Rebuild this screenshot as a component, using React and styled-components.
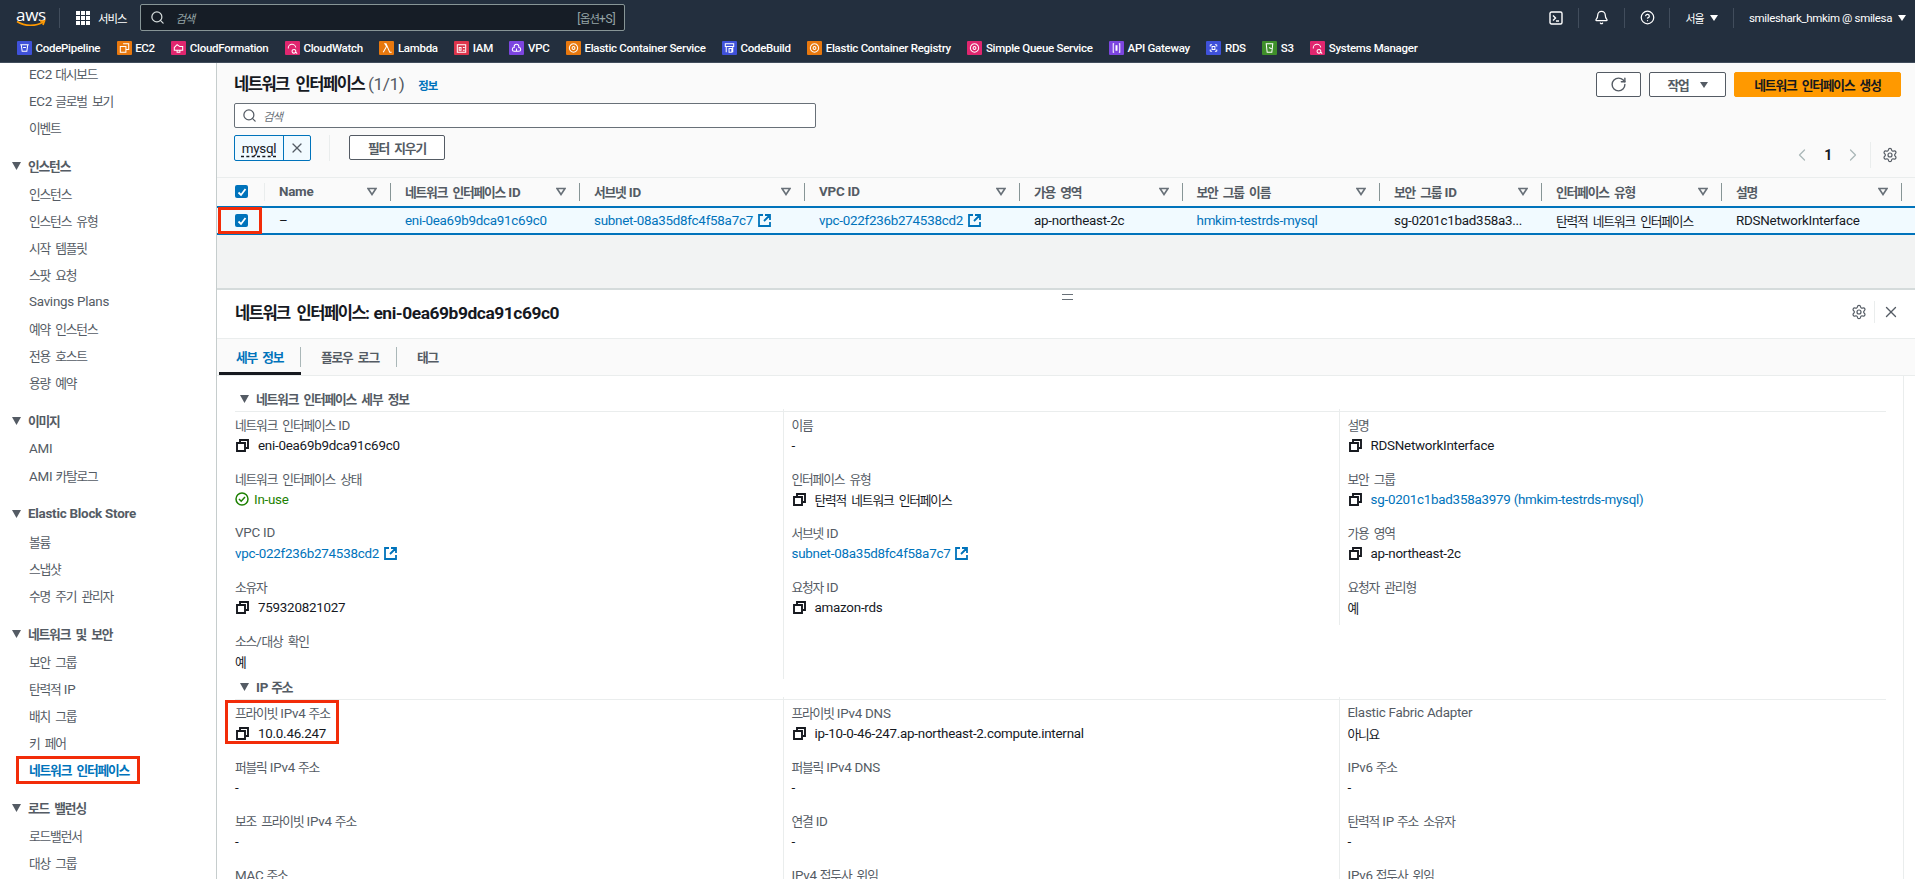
import React from 'react';
import styled, { createGlobalStyle } from 'styled-components';
import { Search, RotateCw, ChevronLeft, ChevronRight, X, Settings, Bell, CircleHelp } from 'lucide-react';

const LINK = '#0073bb';
const MUTED = '#545b64';
const INK = '#16191f';
const LINE = '#eaeded';

const GlobalStyle = createGlobalStyle`
    html, body { margin: 0; height: 100%; overflow: hidden; }
    body {
        font-family: Roboto, "Noto Sans CJK KR", sans-serif;
        font-size: 13.4px;
        letter-spacing: -.25px;
        color: ${INK};
        background: #fff;
    }
    * { box-sizing: border-box; }
`;

// Hangul runs set tighter than the latin around them
const HangulRun = styled.span`
    font-family: "Noto Sans CJK KR", sans-serif;
    font-size: .95em;
    letter-spacing: -.09em;
    word-spacing: .27em;
`;

const T = ({ children }) => (
    <>
        {String(children).split(/([\uAC00-\uD7A3]+(?: [\uAC00-\uD7A3]+)*)/).map((part, i) => (
            i % 2 ? <HangulRun key={i}>{part}</HangulRun> : part
        ))}
    </>
);

const Page = styled.div`
    height: 100vh;
    display: flex;
    flex-direction: column;
    overflow: hidden;
`;

/* top navigation */
const Header = styled.header`
    flex: 0 0 63px;
    background: #232f3e;
    color: #fff;
    border-bottom: 1px solid #414d5c;
`;

const TopRow = styled.div`
    height: 35px;
    display: flex;
    align-items: center;
    padding-left: 16px;
`;

const AwsLogo = styled.div`
    width: 30px;
    height: 20px;
    position: relative;
    font: 500 17px/13px "Open Sans", sans-serif;
    letter-spacing: -.3px;
    margin-top: 1px;
    svg { position: absolute; left: 0; top: 12px; }
`;

const NavDivider = styled.div`
    width: 1px;
    height: 20px;
    margin-left: ${p => p.$ml || 0}px;
    background: #414d5c;
`;

const ServicesButton = styled.div`
    display: flex;
    align-items: center;
    gap: 8px;
    font-size: 12px;
    margin: 0 14px 0 16px;
`;

const GridDots = styled.div`
    width: 14px;
    height: 14px;
    display: grid;
    grid-template-columns: repeat(3, 4px);
    gap: 1px;
    i { background: #fff; }
`;

const GlobalSearch = styled.div`
    width: 485px;
    height: 27px;
    display: flex;
    align-items: center;
    gap: 10px;
    padding: 0 9px 0 9px;
    background: #161d26;
    border: 1px solid #879596;
    border-radius: 2px;
    font-size: 12px;
    color: #95a5a6;
    em { flex: 1; }
`;

const NavRight = styled.div`
    margin-left: auto;
    display: flex;
    align-items: center;
    height: 100%;
`;

const NavCell = styled.div`
    height: 20px;
    display: flex;
    align-items: center;
    justify-content: center;
    gap: 6px;
    width: ${p => p.$w}px;
    padding-left: ${p => p.$pad || 0}px;
    font-size: 11.5px;
    letter-spacing: -.35px;
    white-space: nowrap;
    border-left: ${p => (p.$first ? 'none' : '1px solid #414d5c')};
`;

const Caret = styled.span`
    width: 0;
    height: 0;
    border-left: 4px solid transparent;
    border-right: 4px solid transparent;
    border-top: 6px solid ${p => p.$color || '#fff'};
`;

const ShortcutRow = styled.div`
    height: 27px;
    display: flex;
    align-items: center;
    gap: 16.5px;
    padding: 0 0 1px 17px;
`;

const Shortcut = styled.div`
    display: flex;
    align-items: center;
    gap: 3.5px;
    font-size: 11.5px;
    font-weight: 500;
    letter-spacing: -.28px;
    white-space: nowrap;
`;

const ServiceTile = styled.svg`
    width: 15px;
    height: 14px;
    flex: none;
    display: block;
    background: ${p => p.$bg};
    border-radius: 1px;
    fill: none;
    stroke: #fff;
    stroke-width: 1.1;
`;

const GLYPHS = {
    pipeline: <path d="M3 4h9M4 4l1 7h5l1-7M6 7h3" />,
    ec2: <path d="M6 3h6v6H9M3 6h6v6H3z" />,
    stack: <path d="M3 10V7l3-3 3 2h3v4zM6 10v2h3v-2" />,
    watch: <path d="M3 8a4 4 0 0 1 8-1M9 9a2 2 0 1 0 .1 0M10.5 11.5l2 2" />,
    lambda: <path d="M4 12l3.5-6L6 3H5m1 0h1l4 9h2" />,
    iam: <path d="M3 4h9v8H3zM5 7h2v3H5zM9 7h2M9 10h2" />,
    vpc: <path d="M5 6a2.5 2.5 0 0 1 5 0v1a2 2 0 0 1 0 4H5a2 2 0 0 1 0-4zM7.5 8v3" />,
    gear: <path d="M7.5 3a4.5 4.5 0 1 0 .01 0M7.5 6a1.5 1.5 0 1 0 .01 0" />,
    build: <path d="M3 3h9v3H3zM4 6v6M11 6v6M7 8h3v4H7z" />,
    bracket: <path d="M5 3H4v9h1M10 3h1v9h-1M7 5h1v5H7z" />,
    cluster: <path d="M4 4h2M9 4h2M4 11h2M9 11h2M4 4v2M11 4v2M4 9v2M11 9v2M6 6h3v3H6z" />,
    bucket: <path d="M4 3h7l-1 9H5zM7 7l4 2" />,
};

const Service = ({ name, bg, glyph }) => (
    <Shortcut>
        <ServiceTile viewBox="0 0 15 15" $bg={bg}>{GLYPHS[glyph]}</ServiceTile>
        {name}
    </Shortcut>
);

const SHORTCUTS = [
    ['CodePipeline', '#3f51d9', 'pipeline'],
    ['EC2', '#e8780e', 'ec2'],
    ['CloudFormation', '#e0266f', 'stack'],
    ['CloudWatch', '#e0266f', 'watch'],
    ['Lambda', '#e8780e', 'lambda'],
    ['IAM', '#dd344c', 'iam'],
    ['VPC', '#7c45e0', 'vpc'],
    ['Elastic Container Service', '#e8780e', 'gear'],
    ['CodeBuild', '#3f51d9', 'build'],
    ['Elastic Container Registry', '#e8780e', 'gear'],
    ['Simple Queue Service', '#e0266f', 'gear'],
    ['API Gateway', '#7c45e0', 'bracket'],
    ['RDS', '#3f51d9', 'cluster'],
    ['S3', '#3f8f2a', 'bucket'],
    ['Systems Manager', '#e0266f', 'watch'],
];

/* left navigation */
const Body = styled.div`
    flex: 1;
    min-height: 0;
    display: flex;
`;

const Sidebar = styled.nav`
    flex: 0 0 217px;
    overflow: hidden;
    background: #fff;
    border-right: 1px solid #c6cdcd;
    color: ${MUTED};
    padding-top: 0;
`;

const SideList = styled.div`
    margin-top: -3px;
`;

const SideItem = styled.div`
    position: relative;
    height: 27px;
    line-height: 27px;
    padding-left: 29px;
    white-space: nowrap;
    color: ${p => (p.$active ? LINK : MUTED)};
    font-weight: ${p => (p.$active ? 700 : 400)};
`;

const SideHeading = styled.div`
    height: 39px;
    padding: 11px 0 0 12px;
    line-height: 28px;
    display: flex;
    align-items: center;
    gap: 7px;
    font-weight: 700;
    color: ${MUTED};
`;

const SideMark = styled.span`
    position: absolute;
    left: 16px;
    top: 0;
    width: 124px;
    height: 28px;
    border: 3px solid #f22c09;
`;

const NAV = [
    [null, ['EC2 대시보드', 'EC2 글로벌 보기', '이벤트']],
    ['인스턴스', ['인스턴스', '인스턴스 유형', '시작 템플릿', '스팟 요청', 'Savings Plans', '예약 인스턴스', '전용 호스트', '용량 예약']],
    ['이미지', ['AMI', 'AMI 카탈로그']],
    ['Elastic Block Store', ['볼륨', '스냅샷', '수명 주기 관리자']],
    ['네트워크 및 보안', ['보안 그룹', '탄력적 IP', '배치 그룹', '키 페어', '네트워크 인터페이스']],
    ['로드 밸런싱', ['로드밸런서', '대상 그룹']],
];

/* main column */
const Main = styled.main`
    flex: 1;
    min-width: 0;
    display: flex;
    flex-direction: column;
    background: #f2f3f3;
`;

const ListPanel = styled.section`
    flex: none;
`;

const ListTop = styled.div`
    height: 114px;
    padding: 9px 14px 0 17px;
    background: #fafafa;
`;

const TitleRow = styled.div`
    height: 25px;
    display: flex;
    align-items: center;
    gap: 8px;
`;

const PageTitle = styled.h1`
    margin: 0;
    padding-bottom: 3px;
    font-size: 17.4px;
    font-weight: 700;
    span.count { font-weight: 400; color: ${MUTED}; margin-left: 4px; letter-spacing: -.5px; }
`;

const InfoLink = styled.a`
    color: ${LINK};
    font-size: 12px;
    font-weight: 700;
    margin-left: 6px;
`;

const Actions = styled.div`
    margin-left: auto;
    display: flex;
    gap: 8px;
`;

const Button = styled.button`
    height: 25px;
    width: ${p => p.$w}px;
    display: flex;
    align-items: center;
    justify-content: center;
    gap: 11px;
    padding: 0;
    font: 700 13.4px Roboto, "Noto Sans CJK KR", sans-serif;
    color: ${p => (p.$primary ? INK : MUTED)};
    background: ${p => (p.$primary ? '#ff9900' : '#fff')};
    border: 1px solid ${p => (p.$primary ? '#ff9900' : MUTED)};
    border-radius: 2px;
`;

const FilterInput = styled.div`
    width: 582px;
    height: 25px;
    margin-top: 6px;
    display: flex;
    align-items: center;
    gap: 6px;
    padding-left: 7px;
    background: #fff;
    border: 1px solid #687078;
    border-radius: 2px;
    font-size: 12px;
    color: #687078;
`;

const FilterRow = styled.div`
    height: 26px;
    margin-top: 7px;
    display: flex;
`;

const Token = styled.div`
    width: 77px;
    display: flex;
    background: #f1faff;
    border: 1px solid ${LINK};
    border-radius: 2px;
    div { width: 49px; border-right: 1px solid ${LINK}; display: flex; align-items: center; justify-content: center; }
    u { text-decoration: underline dashed; text-underline-offset: 3px; }
    span { flex: 1; display: flex; align-items: center; justify-content: center; color: ${MUTED}; }
`;

const ThinRule = styled.div`
    width: 1px;
    background: ${LINE};
    margin: 0 19px 0 18px;
`;

const Pager = styled.div`
    margin-left: auto;
    height: 26px;
    margin-top: 7px;
    display: flex;
    align-items: center;
    color: #aab7b8;
    b { color: ${INK}; font-size: 14px; margin: 0 11px 0 12px; }
`;

const PagerGear = styled.div`
    margin-left: 7px;
    padding: 0 3px 0 11px;
    height: 26px;
    display: flex;
    align-items: center;
    color: ${MUTED};
    border-left: 1px solid ${LINE};
`;

const TABLE_COLUMNS = '48px 126px 189px 225px 215px 162.5px 197.5px 162px 180px 180px';

const HeadRow = styled.div`
    display: grid;
    grid-template-columns: ${TABLE_COLUMNS};
    align-items: center;
    height: 29px;
    padding-bottom: 1px;
    background: #fafafa;
    border-top: 1px solid ${LINE};
`;

const HeadCell = styled.div`
    height: 18px;
    display: flex;
    align-items: center;
    justify-content: space-between;
    padding: 0 13px 0 14px;
    font-weight: 700;
    white-space: nowrap;
    color: ${MUTED};
    border-right: 1px solid #879596;
`;

const CheckCell = styled.div`
    height: 18px;
    display: flex;
    align-items: center;
    padding-left: 18px;
    border-right: 1px solid ${LINE};
`;

const Checkbox = styled.span`
    width: 13px;
    height: 13px;
    display: flex;
    align-items: center;
    justify-content: center;
    background: ${LINK};
    border-radius: 2px;
`;

const DataRow = styled.div`
    display: grid;
    grid-template-columns: ${TABLE_COLUMNS};
    height: 29px;
    background: #f1faff;
    border-top: 2px solid ${LINK};
    border-bottom: 2px solid ${LINK};
`;

const DataCell = styled.div`
    position: relative;
    display: flex;
    align-items: center;
    gap: 5px;
    padding-left: ${p => p.$pad || 14}px;
    white-space: nowrap;
    color: ${p => (p.$link ? LINK : INK)};
`;

const RowMark = styled.span`
    position: absolute;
    left: 1px;
    top: -1px;
    width: 44px;
    height: 27px;
    border: 3px solid #f22c09;
`;

const Spacer = styled.div`
    flex: 0 0 53px;
`;

/* detail panel */
const DetailPanel = styled.section`
    flex: 1;
    min-height: 0;
    display: flex;
    flex-direction: column;
    position: relative;
    background: #fff;
    border-top: 2px solid #d5dbdb;
`;

const DragHandle = styled.span`
    position: absolute;
    left: 845px;
    top: 4px;
    width: 11px;
    height: 6px;
    border-top: 1.5px solid #687078;
    border-bottom: 1.5px solid #687078;
`;

const DetailHead = styled.div`
    flex: 0 0 49px;
    display: flex;
    align-items: center;
    padding: 0 15px 5px 18px;
    border-bottom: 1px solid ${LINE};
    h2 { margin: 0; font-size: 17.4px; font-weight: 700; letter-spacing: -.45px; }
`;

const DetailTools = styled.div`
    margin-left: auto;
    display: flex;
    align-items: center;
    color: ${MUTED};
    span { margin-left: 7px; padding-left: 7px; height: 22px; display: flex; align-items: center; border-left: 1px solid ${LINE}; }
`;

const Tabs = styled.div`
    flex: 0 0 37px;
    display: flex;
    align-items: stretch;
    padding-left: 2px;
    background: #fafafa;
    border-bottom: 1px solid ${LINE};
`;

const Tab = styled.div`
    height: 36px;
    width: ${p => p.$w}px;
    padding: 0 0 2px ${p => p.$pad}px;
    display: flex;
    align-items: center;
    font-weight: 700;
    color: ${p => (p.$active ? LINK : MUTED)};
    box-shadow: ${p => (p.$active ? `inset 0 -3px 0 ${INK}` : 'none')};
    position: relative;
    &:not(:last-child)::after {
        content: '';
        position: absolute;
        right: 0;
        top: 8px;
        height: 20px;
        width: 1px;
        background: #aab7b8;
    }
`;

const DetailScroll = styled.div`
    flex: 1;
    min-height: 0;
    overflow: hidden;
    padding: 0 0 0 18px;
    margin-right: 11px;
    border-right: 1px solid ${LINE};
`;

const SectionHead = styled.div`
    width: 1651px;
    height: ${p => (p.$first ? 36 : 21)}px;
    padding: ${p => (p.$first ? '15px' : '0')} 0 5px 5px;
    display: flex;
    align-items: center;
    gap: 7px;
    font-weight: 700;
    color: ${MUTED};
    border-bottom: 1px solid ${LINE};
`;

const FieldGrid = styled.div`
    margin-top: -3px;
    display: grid;
    grid-template-columns: 547.5px 556px 548px;
`;

const FieldColumn = styled.div`
    padding: 6px 0 8px ${p => (p.$rule ? 8 : 0)}px;
    border-left: ${p => (p.$rule ? `1px solid ${LINE}` : 'none')};
    align-self: ${p => (p.$short ? 'start' : 'stretch')};
`;

const Field = styled.div`
    position: relative;
    & + & { margin-top: 14px; }
`;

const FieldLabel = styled.div`
    height: 20px;
    line-height: 20px;
    color: ${MUTED};
    white-space: nowrap;
`;

const FieldValue = styled.div`
    height: 20px;
    display: flex;
    align-items: center;
    gap: 9px;
    white-space: nowrap;
    color: ${p => (p.$link ? LINK : INK)};
`;

const StatusOk = styled.div`
    height: 20px;
    display: flex;
    align-items: center;
    gap: 5px;
    color: #1d8102;
`;

const LinkValue = styled.div`
    height: 20px;
    display: flex;
    align-items: center;
    gap: 5px;
    color: ${LINK};
    white-space: nowrap;
`;

const FieldMark = styled.span`
    position: absolute;
    left: -10px;
    top: -3px;
    width: 114px;
    height: 44px;
    border: 3px solid #f22c09;
`;

/* drawn icons */
const DownTriangle = () => (
    <svg width="10" height="9" viewBox="0 0 10 9" fill="none" stroke="#687078" strokeWidth="1.6"><path d="M1 1.5h8L5 7.5z" /></svg>
);

const SideArrow = () => (
    <svg width="9" height="8" viewBox="0 0 9 8" fill={MUTED}><path d="M0 0h9L4.5 8z" /></svg>
);

const CheckMark = () => (
    <svg width="10" height="10" viewBox="0 0 10 10" fill="none" stroke="#fff" strokeWidth="1.8"><path d="M1.5 5.5l2.5 2.5 4.5-6" /></svg>
);

const ExternalIcon = () => (
    <svg width="13" height="13" viewBox="0 0 13 13" fill="none" stroke={LINK} strokeWidth="1.8" style={{ flex: 'none' }}>
        <path d="M5 1H1v11h11V8M7 1h5v5M12 1L6 7" />
    </svg>
);

const CopyIcon = () => (
    <svg width="13" height="13" viewBox="0 0 13 13" fill="none" stroke={INK} strokeWidth="1.9" style={{ flex: 'none', marginLeft: 1 }}>
        <path d="M1 4h8v8H1zM4 3V1h8v8h-2" />
    </svg>
);

const CheckCircle = () => (
    <svg width="14" height="14" viewBox="0 0 14 14" fill="none" stroke="#1d8102" strokeWidth="1.5" style={{ flex: 'none' }}>
        <circle cx="7" cy="7" r="6" /><path d="M4 7l2.2 2.2L10 5" />
    </svg>
);

const TerminalIcon = () => (
    <svg width="14" height="14" viewBox="0 0 14 14" fill="none" stroke="#fff" strokeWidth="1.4">
        <rect x="1" y="1" width="12" height="12" rx="1.5" /><path d="M4 4.5L6.5 7 4 9.5M7 10h3" />
    </svg>
);

const Copyable = ({ children }) => <FieldValue><CopyIcon /><span><T>{children}</T></span></FieldValue>;
const Plain = ({ children }) => <FieldValue><span><T>{children}</T></span></FieldValue>;
const External = ({ children }) => <LinkValue>{children}<ExternalIcon /></LinkValue>;

const Item = ({ label, mark, children }) => (
    <Field>
        {mark && <FieldMark />}
        <FieldLabel><T>{label}</T></FieldLabel>
        {children}
    </Field>
);

const HEADS = ['Name', '네트워크 인터페이스 ID', '서브넷 ID', 'VPC ID', '가용 영역', '보안 그룹 이름', '보안 그룹 ID', '인터페이스 유형', '설명'];

const App = () => (
    <Page>
        <GlobalStyle />
        <Header>
            <TopRow>
                <AwsLogo>
                    aws
                    <svg width="30" height="8" viewBox="0 0 30 8" fill="none" stroke="#ff9900" strokeWidth="1.6"><path d="M1 1.5c8 5 19 5 26 .5M24 1h4.5L27 5" /></svg>
                </AwsLogo>
                <NavDivider $ml={13} />
                <ServicesButton>
                    <GridDots>{Array.from({ length: 9 }, (_, i) => <i key={i} />)}</GridDots>
                    <T>서비스</T>
                </ServicesButton>
                <GlobalSearch>
                    <Search size={15} color="#d5dbdb" strokeWidth={2} />
                    <em><T>검색</T></em>
                    <span>[<T>옵션</T>+S]</span>
                </GlobalSearch>
                <NavRight>
                    <NavCell $w={45} $first><TerminalIcon /></NavCell>
                    <NavCell $w={46}><Bell size={15} strokeWidth={2} /></NavCell>
                    <NavCell $w={45}><CircleHelp size={15} strokeWidth={2} /></NavCell>
                    <NavCell $w={64}><T>서울</T><Caret /></NavCell>
                    <NavCell $w={182} $pad={6}>smileshark_hmkim @ smilesa<Caret /></NavCell>
                </NavRight>
            </TopRow>
            <ShortcutRow>
                {SHORTCUTS.map(([name, bg, glyph]) => <Service key={name} name={name} bg={bg} glyph={glyph} />)}
            </ShortcutRow>
        </Header>
        <Body>
            <Sidebar>
                <SideList>
                    {NAV.map(([title, items]) => (
                        <div key={items[0]}>
                            {title && <SideHeading><SideArrow /><span><T>{title}</T></span></SideHeading>}
                            {items.map(item => (
                                <SideItem key={item} $active={item === '네트워크 인터페이스'}>
                                    {item === '네트워크 인터페이스' && <SideMark />}
                                    <T>{item}</T>
                                </SideItem>
                            ))}
                        </div>
                    ))}
                </SideList>
            </Sidebar>
            <Main>
                <ListPanel>
                    <ListTop>
                        <TitleRow>
                            <PageTitle><T>네트워크 인터페이스</T><span className="count">(1/1)</span></PageTitle>
                            <InfoLink><T>정보</T></InfoLink>
                            <Actions>
                                <Button $w={45}><RotateCw size={17} strokeWidth={2} /></Button>
                                <Button $w={77}><T>작업</T><Caret $color={MUTED} /></Button>
                                <Button $w={167} $primary><T>네트워크 인터페이스 생성</T></Button>
                            </Actions>
                        </TitleRow>
                        <FilterInput>
                            <Search size={15} color={MUTED} strokeWidth={2} />
                            <em><T>검색</T></em>
                        </FilterInput>
                        <FilterRow>
                            <Token>
                                <div><u>mysql</u></div>
                                <span><X size={16} strokeWidth={1.8} /></span>
                            </Token>
                            <ThinRule />
                            <Button $w={96}><T>필터 지우기</T></Button>
                            <Pager>
                                <ChevronLeft size={20} strokeWidth={1.5} />
                                <b>1</b>
                                <ChevronRight size={20} strokeWidth={1.5} />
                                <PagerGear><Settings size={16} strokeWidth={1.8} /></PagerGear>
                            </Pager>
                        </FilterRow>
                    </ListTop>
                    <HeadRow>
                        <CheckCell><Checkbox><CheckMark /></Checkbox></CheckCell>
                        {HEADS.map(head => (
                            <HeadCell key={head}><span><T>{head}</T></span><DownTriangle /></HeadCell>
                        ))}
                    </HeadRow>
                    <DataRow>
                        <DataCell $pad={18}>
                            <RowMark />
                            <Checkbox><CheckMark /></Checkbox>
                        </DataCell>
                        <DataCell>–</DataCell>
                        <DataCell $link>eni-0ea69b9dca91c69c0</DataCell>
                        <DataCell $link>subnet-08a35d8fc4f58a7c7<ExternalIcon /></DataCell>
                        <DataCell $link>vpc-022f236b274538cd2<ExternalIcon /></DataCell>
                        <DataCell>ap-northeast-2c</DataCell>
                        <DataCell $link>hmkim-testrds-mysql</DataCell>
                        <DataCell>sg-0201c1bad358a3...</DataCell>
                        <DataCell><span><T>탄력적 네트워크 인터페이스</T></span></DataCell>
                        <DataCell>RDSNetworkInterface</DataCell>
                    </DataRow>
                </ListPanel>
                <Spacer />
                <DetailPanel>
                    <DragHandle />
                    <DetailHead>
                        <h2><T>네트워크 인터페이스</T>: eni-0ea69b9dca91c69c0</h2>
                        <DetailTools>
                            <Settings size={16} strokeWidth={1.8} />
                            <span><X size={18} strokeWidth={1.8} /></span>
                        </DetailTools>
                    </DetailHead>
                    <Tabs>
                        <Tab $active $w={82} $pad={17}><T>세부 정보</T></Tab>
                        <Tab $w={96} $pad={20}><T>플로우 로그</T></Tab>
                        <Tab $w={60} $pad={20}><T>태그</T></Tab>
                    </Tabs>
                    <DetailScroll>
                        <SectionHead $first><SideArrow /><span><T>네트워크 인터페이스 세부 정보</T></span></SectionHead>
                        <FieldGrid>
                            <FieldColumn>
                                <Item label="네트워크 인터페이스 ID"><Copyable>eni-0ea69b9dca91c69c0</Copyable></Item>
                                <Item label="네트워크 인터페이스 상태"><StatusOk><CheckCircle />In-use</StatusOk></Item>
                                <Item label="VPC ID"><External>vpc-022f236b274538cd2</External></Item>
                                <Item label="소유자"><Copyable>759320821027</Copyable></Item>
                                <Item label="소스/대상 확인"><Plain>예</Plain></Item>
                            </FieldColumn>
                            <FieldColumn $rule>
                                <Item label="이름"><Plain>-</Plain></Item>
                                <Item label="인터페이스 유형"><Copyable>탄력적 네트워크 인터페이스</Copyable></Item>
                                <Item label="서브넷 ID"><External>subnet-08a35d8fc4f58a7c7</External></Item>
                                <Item label="요청자 ID"><Copyable>amazon-rds</Copyable></Item>
                            </FieldColumn>
                            <FieldColumn $rule $short>
                                <Item label="설명"><Copyable>RDSNetworkInterface</Copyable></Item>
                                <Item label="보안 그룹">
                                    <FieldValue $link><CopyIcon />sg-0201c1bad358a3979 (hmkim-testrds-mysql)</FieldValue>
                                </Item>
                                <Item label="가용 영역"><Copyable>ap-northeast-2c</Copyable></Item>
                                <Item label="요청자 관리형"><Plain>예</Plain></Item>
                            </FieldColumn>
                        </FieldGrid>
                        <SectionHead><SideArrow /><span><T>IP 주소</T></span></SectionHead>
                        <FieldGrid>
                            <FieldColumn>
                                <Item label="프라이빗 IPv4 주소" mark><Copyable>10.0.46.247</Copyable></Item>
                                <Item label="퍼블릭 IPv4 주소"><Plain>-</Plain></Item>
                                <Item label="보조 프라이빗 IPv4 주소"><Plain>-</Plain></Item>
                                <Item label="MAC 주소"><Plain>-</Plain></Item>
                            </FieldColumn>
                            <FieldColumn $rule>
                                <Item label="프라이빗 IPv4 DNS"><Copyable>ip-10-0-46-247.ap-northeast-2.compute.internal</Copyable></Item>
                                <Item label="퍼블릭 IPv4 DNS"><Plain>-</Plain></Item>
                                <Item label="연결 ID"><Plain>-</Plain></Item>
                                <Item label="IPv4 접두사 위임"><Plain>-</Plain></Item>
                            </FieldColumn>
                            <FieldColumn $rule>
                                <Item label="Elastic Fabric Adapter"><Plain>아니요</Plain></Item>
                                <Item label="IPv6 주소"><Plain>-</Plain></Item>
                                <Item label="탄력적 IP 주소 소유자"><Plain>-</Plain></Item>
                                <Item label="IPv6 접두사 위임"><Plain>-</Plain></Item>
                            </FieldColumn>
                        </FieldGrid>
                    </DetailScroll>
                </DetailPanel>
            </Main>
        </Body>
    </Page>
);

export default App;
